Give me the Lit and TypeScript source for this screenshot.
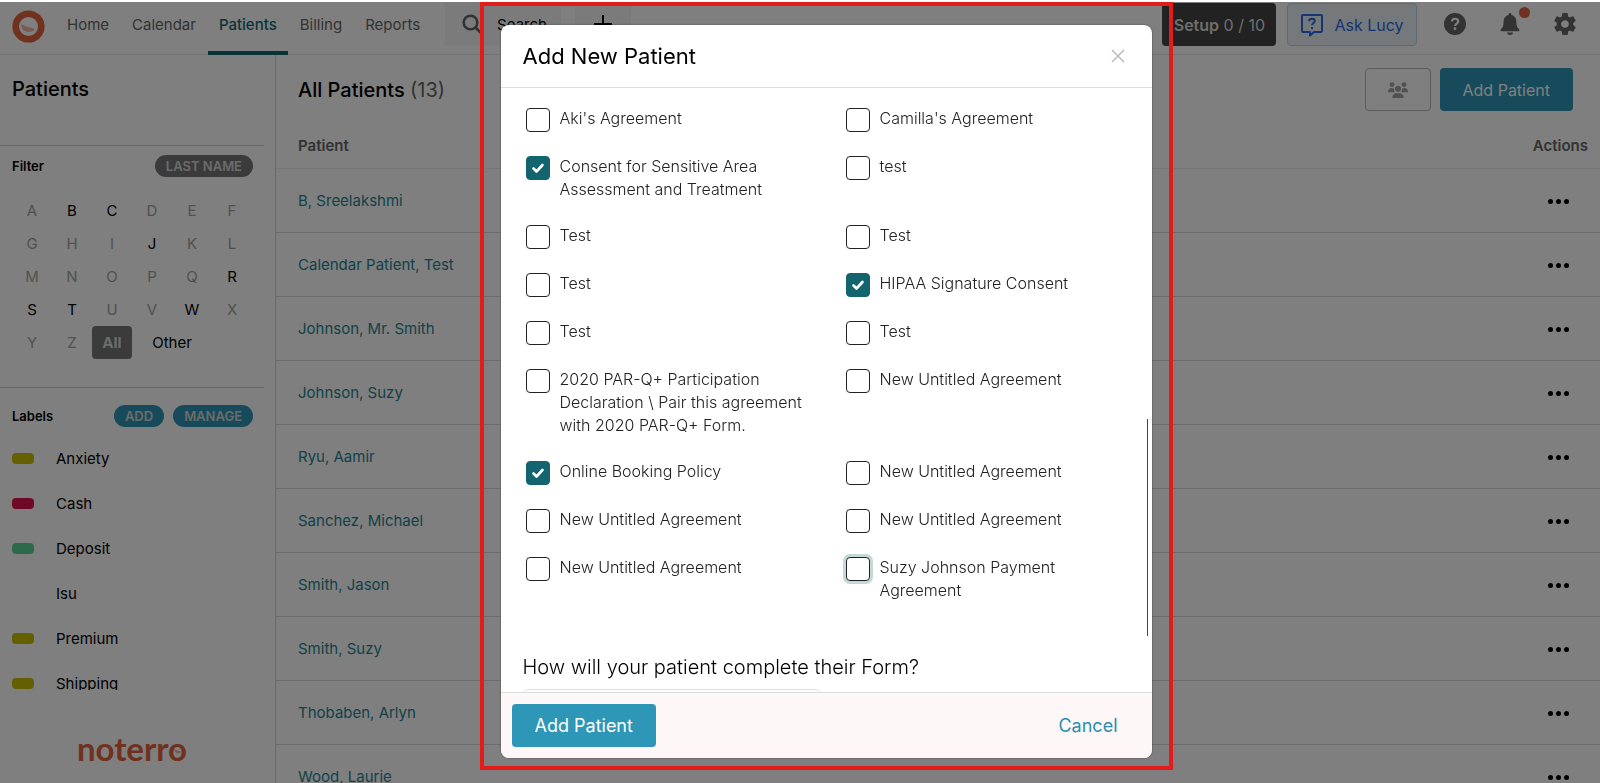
import { LitElement, html, css, svg } from "lit";
import { customElement, state } from "lit/decorators.js";
import { classMap } from "lit/directives/class-map.js";

interface Agreement { name: string; checked?: boolean; focused?: boolean; }

const NAV = ["Home", "Calendar", "Patients", "Billing", "Reports"];
const ACTIVE_LETTERS = "BCJRSTW";
const LABELS = [
  { name: "Anxiety", color: "#c8be00" },
  { name: "Cash", color: "#e0124f" },
  { name: "Deposit", color: "#59d493" },
  { name: "Isu", color: "transparent" },
  { name: "Premium", color: "#c8be00" },
  { name: "Shipping", color: "#c8be00" },
];
const PATIENTS = [
  "B, Sreelakshmi", "Calendar Patient, Test", "Johnson, Mr. Smith", "Johnson, Suzy", "Ryu, Aamir",
  "Sanchez, Michael", "Smith, Jason", "Smith, Suzy", "Thobaben, Arlyn", "Wood, Laurie",
];
const AGREEMENTS: Agreement[] = [
  { name: "Aki's Agreement" }, { name: "Camilla's Agreement" },
  { name: "Consent for Sensitive Area Assessment and Treatment", checked: true }, { name: "test" },
  { name: "Test" }, { name: "Test" },
  { name: "Test" }, { name: "HIPAA Signature Consent", checked: true },
  { name: "Test" }, { name: "Test" },
  { name: "2020 PAR-Q+ Participation Declaration \\ Pair this agreement with 2020 PAR-Q+ Form." }, { name: "New Untitled Agreement" },
  { name: "Online Booking Policy", checked: true }, { name: "New Untitled Agreement" },
  { name: "New Untitled Agreement" }, { name: "New Untitled Agreement" },
  { name: "New Untitled Agreement" }, { name: "Suzy Johnson Payment Agreement", focused: true },
];

const logoMark = svg`<svg class="mark" viewBox="0 0 34 34" aria-hidden="true">
  <circle cx="17" cy="17" r="13.2" fill="none" stroke="#e2633f" stroke-width="6.800"/>
  <path d="M9.500 14.500 L15 17 L23.500 19.500 C22.500 22 17.500 23.500 14 22 C11 21 9.500 18 9.500 14.500Z" fill="#efb5a4"/></svg>`;
const searchIcon = svg`<svg width="21" height="21" viewBox="0 0 21 21" fill="none" stroke="#666" stroke-width="2.600" aria-hidden="true"><circle cx="8.500" cy="8.500" r="6.800"/><path d="M13.500 13.500L19.500 19.500"/></svg>`;
const chatIcon = svg`<svg width="24" height="24" viewBox="0 0 24 24" fill="none" stroke="#2a6be8" stroke-width="2" aria-hidden="true">
  <path d="M3 2h18a1 1 0 0 1 1 1v15a1 1 0 0 1-1 1h-7l-4 3.500V19H3a1 1 0 0 1-1-1V3a1 1 0 0 1 1-1z" stroke-linejoin="round"/>
  <path d="M9 8.200c.2-3.400 5.800-3.200 5.800-.2 0 2.200-2.800 2-2.800 4.300"/><path d="M12 14v2.200"/></svg>`;
const helpIcon = svg`<svg width="22" height="22" viewBox="0 0 22 22" aria-hidden="true"><circle cx="11" cy="11" r="11" fill="#666"/>
  <path d="M7.900 8.300c.3-3.500 6.300-3.300 6.300.1 0 2.200-3.100 2.200-3.100 4.600" fill="none" stroke="#fff" stroke-width="2.200"/><circle cx="11" cy="15.700" r="1.400" fill="#fff"/></svg>`;
const bellIcon = svg`<svg width="20" height="22" viewBox="0 0 20 22" fill="#666" aria-hidden="true"><path d="M10 0c.8 0 1.400.6 1.400 1.400v.7c3 .7 5 3 5 6.400 0 5 .9 6 2.600 7.500.8.800.4 2.200-.8 2.200H1.800C.6 18.200.2 16.800 1 16c1.700-1.500 2.600-2.500 2.600-7.500 0-3.400 2-5.700 5-6.400v-.7C8.600.6 9.200 0 10 0z"/><path d="M7 19.600h6a3 2.400 0 0 1-6 0z"/></svg>`;
const gearIcon = svg`<svg width="22" height="22" viewBox="2 2 20 20" fill="#666" aria-hidden="true"><path d="M19.430 12.980c.04-.32.070-.640.070-.980s-.03-.660-.070-.980l2.110-1.650c.19-.150.240-.420.120-.640l-2-3.460c-.12-.22-.39-.3-.61-.22l-2.490 1c-.52-.4-1.080-.730-1.690-.980l-.38-2.650A.488.488 0 0 0 14 2h-4c-.25 0-.46.180-.49.420l-.38 2.650c-.61.250-1.170.590-1.690.980l-2.490-1c-.23-.09-.49 0-.61.220l-2 3.460c-.13.220-.07.490.12.640l2.110 1.650c-.04.320-.07.650-.07.980s.03.660.07.980l-2.110 1.650c-.19.150-.24.420-.12.640l2 3.460c.12.220.39.300.61.220l2.490-1c.52.400 1.080.730 1.690.980l.38 2.650c.03.240.24.420.49.420h4c.25 0 .46-.18.490-.42l.38-2.650c.61-.25 1.170-.59 1.690-.98l2.490 1c.23.090.49 0 .61-.22l2-3.460c.12-.22.070-.49-.12-.64l-2.110-1.650zM12 15.500c-1.930 0-3.500-1.570-3.500-3.500s1.570-3.500 3.500-3.500 3.500 1.570 3.500 3.500-1.570 3.500-3.500 3.500z"/></svg>`;
const groupIcon = svg`<svg width="20" height="16" viewBox="0 0 20 16" fill="#a2a2a2" aria-hidden="true"><circle cx="4" cy="2.600" r="2.400"/><circle cx="16" cy="2.600" r="2.400"/><circle cx="10" cy="6.800" r="3"/>
  <path d="M0 10c0-2.500 1.600-4 3.600-4 1 0 1.800.3 2.400.8C5.800 8.200 6.200 9.400 7 10.200H0zM20 10c0-2.500-1.600-4-3.600-4-1 0-1.800.3-2.400.8.2 1.400-.2 2.600-1 3.400h7z"/><path d="M4.200 16c0-3 2-4.800 4.200-4.800h3.200c2.200 0 4.200 1.800 4.200 4.800z"/></svg>`;

@customElement("app-root")
export class AppRoot extends LitElement {
  @state() private agreements = AGREEMENTS;

  static styles = css`
    :host { display: block; height: 100vh; overflow: hidden; font-family: Inter, "Liberation Sans", sans-serif; font-size: 15px; color: #000; background: #fff; }
    * { box-sizing: border-box; }
    button, a, input { font: inherit; }
    button { border: 0; padding: 0; background: none; color: inherit; cursor: pointer; }
    a { text-decoration: none; }
    h1, h2, h3, ul { margin: 0; padding: 0; font-weight: 400; }
    li { list-style: none; }
    svg { display: block; flex: none; }

    .page { height: 100%; padding-top: 2px; display: flex; flex-direction: column; }
    .topbar { flex: none; height: 53px; display: flex; align-items: stretch; border-bottom: 1px solid #e4e4e4; }
    .home { width: 56px; padding: 8px 0 0 12px; }
    .mark { width: 33px; height: 33px; }
    .nav { display: flex; gap: 1px; }
    .nav-link { display: flex; padding: 14px 11px 0; line-height: 18px; color: #666; border-bottom: 4px solid transparent; margin-bottom: -1px; }
    .nav-link.current { color: #12686f; font-weight: 500; border-color: #12686f; }
    .tools { display: flex; margin-left: 14px; gap: 14px; align-items: flex-start; }
    .tool { height: 44px; background: #f7f7f7; display: flex; align-items: center; gap: 14px; padding: 0 14px 0 17px; }
    .tool.plus { width: 56px; justify-content: center; padding: 0; }
    .account { margin-left: auto; display: flex; align-items: flex-start; padding-right: 13px; }
    .setup { width: 114px; height: 43px; margin-top: 1px; background: #444; color: #ddd; border-radius: 4px; font-size: 16px; text-align: right; padding-right: 11px; }
    .setup b { font-weight: 600; }
    .lucy { width: 130px; height: 43px; margin: 1px 16px 0 11px; display: flex; align-items: center; justify-content: center; gap: 10px; background: #ebf2f7; border: 1px solid #c0d4e4; border-radius: 4px; color: #2a6be8; font-size: 16px; }
    .icon { position: relative; width: 44px; height: 44px; display: grid; place-items: center; }
    .icons { display: flex; gap: 11px; }
    .dot { position: absolute; top: 5px; right: 2px; width: 11px; height: 11px; border-radius: 50%; background: #e2633f; }

    .content { flex: 1; min-height: 0; display: flex; }
    .sidebar { width: 276px; flex: none; border-right: 1px solid #d2d2d2; display: flex; flex-direction: column; padding-right: 11px; }
    .side-title { height: 90px; padding: 22px 12px 0; font-size: 20px; line-height: 24px; font-weight: 500; }
    .filter { border-top: 1px solid #cfcfcf; border-bottom: 1px solid #cfcfcf; height: 243px; padding: 9px 0 0; }
    .side-head { display: flex; align-items: center; gap: 9px; height: 22px; padding: 0 11px 0 12px; }
    .side-head h3 { font-size: 13px; font-weight: 600; margin-right: auto; }
    .pill { height: 22px; border-radius: 11px; padding: 0 11px; font-size: 13px; font-weight: 600; color: #d8d8d8; background: #2e97b7; }
    .pill.gray { background: #777; }
    .letters { display: grid; grid-template-columns: repeat(6, 40px); grid-auto-rows: 33px; margin: 17px 0 0 12px; }
    .letter { color: #a2a2a2; border-radius: 4px; }
    .letter.on { color: #000; }
    .letter.all { background: #777; color: #d8d8d8; font-weight: 700; }
    .letter.other { grid-column: span 2; }
    .labels { flex: 1; min-height: 0; padding-top: 17px; display: flex; flex-direction: column; }
    .label-list { flex: 1; min-height: 0; overflow: hidden; padding-top: 9px; }
    .label { display: flex; align-items: center; gap: 22px; height: 45px; padding-left: 12px; }
    .swatch { width: 22px; height: 11px; border-radius: 4px; }
    .brand { flex: none; height: 93px; padding-top: 39px; display: flex; justify-content: center; align-items: flex-start; font-family: Lato, Inter, sans-serif; font-size: 33px; line-height: 38px; font-weight: 700; color: #e2633f; }
    .brand-o { position: relative; }
    .brand-o svg { position: absolute; left: 6px; top: 21px; width: 7px; height: 6px; }

    .main { flex: 1; min-width: 0; overflow: hidden; }
    .main-head { height: 69px; display: flex; align-items: center; padding: 0 27px 0 22px; gap: 9px; }
    .main-head h1 { font-size: 20px; font-weight: 500; margin-right: auto; }
    .count { color: #666; font-weight: 400; }
    .group { width: 66px; height: 43px; border: 1px solid #b8b8b8; border-radius: 4px; display: grid; place-items: center; }
    .primary { height: 43px; padding: 0 23px; border-radius: 4px; background: #2e97b7; color: #fff; }
    .primary.small { font-size: 16px; }
    .patients { width: 100%; border-collapse: collapse; }
    .patients th { height: 44px; font-weight: 600; color: #666; text-align: left; padding: 0 12px 0 22px; border-bottom: 1px solid #ececec; }
    .patients th:last-child, .patients td:last-child { text-align: right; width: 110px; }
    .patients td { height: 64px; padding: 0 31px 0 22px; border-bottom: 1px solid #d8d8d8; }
    .patients a { color: #1f8490; }
    .more { display: inline-flex; gap: 3px; vertical-align: middle; }
    .more i { width: 5px; height: 5px; border-radius: 50%; background: #000; }

    .overlay { position: fixed; inset: 2px 0 0; background: rgba(0, 0, 0, 0.5); padding: 0 0 13px 52px; display: flex; justify-content: center; }
    .frame { width: 693px; max-width: 100%; border: 4px solid #e31b1b; padding: 19px 17px 8px; display: flex; }
    .modal { position: relative; flex: 1; min-width: 0; display: flex; flex-direction: column; background: #fff; border-radius: 8px; overflow: hidden; box-shadow: 0 0 2px rgba(0, 0, 0, 0.5); }
    .modal-head { flex: none; height: 63px; padding: 0 27px 0 22px; display: flex; align-items: center; justify-content: space-between; border-bottom: 1px solid #ddd; }
    .modal-head h2 { font-size: 22px; }
    .modal-body { flex: 1; min-height: 0; overflow: hidden; padding: 19px 16px 0 22px; display: flex; flex-direction: column; gap: 53px; }
    .modal-body > * { flex: none; }
    .agreements { border: 0; margin: 0; padding: 0 0 0 3px; display: grid; grid-template-columns: repeat(2, minmax(0, 290px)); column-gap: 30px; row-gap: 23px; }
    .agreement { display: flex; align-items: flex-start; gap: 10px; min-height: 25px; font-size: 16px; line-height: 23px; font-weight: 300; color: #222; }
    .agreement input { appearance: none; flex: none; width: 24px; height: 24px; margin: 1px 0 0; border: 1px solid #222; border-radius: 4px; background: #fff; }
    .agreement input:checked { border-color: #12646f; background: #12646f url("data:image/svg+xml,%3Csvg xmlns='http://www.w3.org/2000/svg' viewBox='0 0 20 20' fill='none' stroke='white' stroke-width='2.600' stroke-linecap='round' stroke-linejoin='round'%3E%3Cpath d='M5.500 10.500l3 3 6-6.500'/%3E%3C/svg%3E") center / 20px no-repeat; }
    .agreement .focused { box-shadow: 0 0 0 3px #c5d8d8; }
    .question { display: flex; flex-direction: column; gap: 10px; }
    .question label { font-size: 20px; line-height: 24px; font-weight: 300; }
    .question select { width: 298px; height: 43px; border: 1px solid #ddd; border-radius: 6px; background: #fff; appearance: none; }
    .thumb { position: absolute; right: 4px; top: 394px; width: 1px; height: 217px; background: #444; }
    .modal-foot { flex: none; height: 66px; padding: 0 34px 1px 11px; display: flex; align-items: center; justify-content: space-between; background: #fdf7f7; border-top: 1px solid #ddd; font-size: 18px; }
    .cancel { color: #2a8fb0; }
  `;

  private toggle(index: number) {
    this.agreements = this.agreements.map((a, i) => (i === index ? { ...a, checked: !a.checked } : a));
  }

  private renderTopbar() {
    return html`<header class="topbar">
      <a class="home" href="#" aria-label="Home page">${logoMark}</a>
      <nav class="nav">${NAV.map((n) => html`<a href="#" class=${classMap({ "nav-link": true, current: n === "Patients" })}>${n}</a>`)}</nav>
      <div class="tools">
        <button class="tool">${searchIcon}<span>Search</span></button>
        <button class="tool plus" aria-label="Add"><svg width="18" height="18" viewBox="0 0 18 18" stroke="#000" stroke-width="2"><path d="M9 0v18M0 9h18"/></svg></button>
      </div>
      <div class="account">
        <button class="setup"><b>Setup</b> 0 / 10</button>
        <button class="lucy">${chatIcon}Ask Lucy</button>
        <div class="icons">
          <button class="icon" aria-label="Help">${helpIcon}</button>
          <button class="icon" aria-label="Notifications">${bellIcon}<span class="dot"></span></button>
          <button class="icon" aria-label="Settings">${gearIcon}</button>
        </div>
      </div>
    </header>`;
  }

  private renderSidebar() {
    return html`<aside class="sidebar">
      <h2 class="side-title">Patients</h2>
      <section class="filter">
        <div class="side-head"><h3>Filter</h3><button class="pill gray">LAST NAME</button></div>
        <div class="letters">
          ${[..."ABCDEFGHIJKLMNOPQRSTUVWXYZ"].map((l) => html`<button class=${classMap({ letter: true, on: ACTIVE_LETTERS.includes(l) })}>${l}</button>`)}
          <button class="letter all">All</button><button class="letter on other">Other</button>
        </div>
      </section>
      <section class="labels">
        <div class="side-head"><h3>Labels</h3><button class="pill">ADD</button><button class="pill">MANAGE</button></div>
        <ul class="label-list">${LABELS.map((l) => html`<li class="label"><span class="swatch" style="background:${l.color}"></span>${l.name}</li>`)}</ul>
      </section>
      <div class="brand"><span>noterr<span class="brand-o">o<svg viewBox="0 0 7 6" aria-hidden="true"><path d="M0 0.500L7 2.500C6.500 5 2 6 0 0.500z" fill="#efb5a4"/></svg></span></span></div>
    </aside>`;
  }

  private renderMain() {
    return html`<main class="main">
      <div class="main-head">
        <h1>All Patients <span class="count">(13)</span></h1>
        <button class="group" aria-label="Merge patients">${groupIcon}</button>
        <button class="primary small">Add Patient</button>
      </div>
      <table class="patients">
        <thead><tr><th>Patient</th><th>Actions</th></tr></thead>
        <tbody>${PATIENTS.map((p) => html`<tr><td><a href="#">${p}</a></td><td><button class="more" aria-label="Actions for ${p}"><i></i><i></i><i></i></button></td></tr>`)}</tbody>
      </table>
    </main>`;
  }

  private renderModal() {
    return html`<div class="overlay"><div class="frame">
      <div class="modal" role="dialog" aria-label="Add New Patient">
        <div class="modal-head"><h2>Add New Patient</h2>
          <button aria-label="Close"><svg width="14" height="14" viewBox="0 0 14 14" stroke="#bbb" stroke-width="1.500"><path d="M1 1l12 12M13 1L1 13"/></svg></button></div>
        <div class="modal-body">
          <fieldset class="agreements" aria-label="Agreements">
            ${this.agreements.map((a, i) => html`<label class="agreement"><input type="checkbox" class=${classMap({ focused: !!a.focused })} .checked=${!!a.checked} @change=${() => this.toggle(i)} /><span>${a.name}</span></label>`)}
          </fieldset>
          <div class="question"><label for="completion">How will your patient complete their Form?</label><select id="completion"></select></div>
        </div>
        <div class="thumb"></div>
        <div class="modal-foot"><button class="primary">Add Patient</button><button class="cancel">Cancel</button></div>
      </div>
    </div></div>`;
  }

  render() {
    return html`<div class="page">${this.renderTopbar()}<div class="content">${this.renderSidebar()}${this.renderMain()}</div></div>${this.renderModal()}`;
  }
}
